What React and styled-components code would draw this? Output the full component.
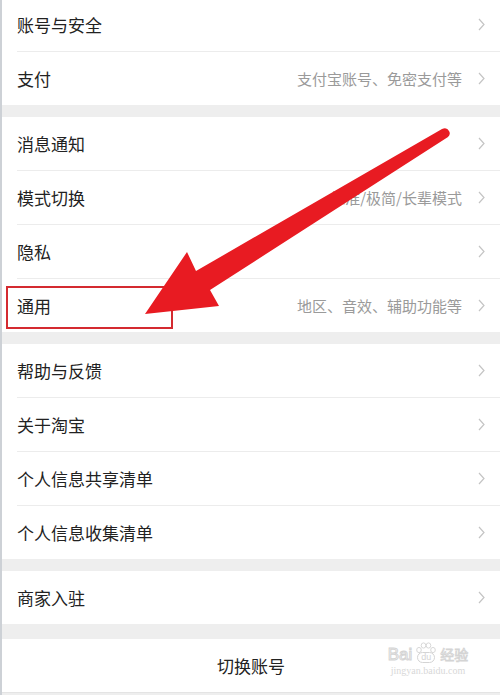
import React from "react";
import styled, { createGlobalStyle } from "styled-components";

const sections = [
  {
    rows: [
      { title: "账号与安全" },
      { title: "支付", hint: "支付宝账号、免密支付等" },
    ],
  },
  {
    rows: [
      { title: "消息通知" },
      { title: "模式切换", hint: "标准/极简/长辈模式" },
      { title: "隐私" },
      { title: "通用", hint: "地区、音效、辅助功能等" },
    ],
  },
  {
    rows: [
      { title: "帮助与反馈" },
      { title: "关于淘宝" },
      { title: "个人信息共享清单" },
      { title: "个人信息收集清单" },
    ],
  },
  {
    rows: [{ title: "商家入驻" }],
  },
];

const Chevron = () => (
  <svg width="7" height="13" viewBox="0 0 7 13">
    <path d="M1 1 L6 6.5 L1 12" fill="none" stroke="#c4c4c4" strokeWidth="1.2" />
  </svg>
);

const App = () => {
  return (
    <>
      <GlobalStyle />
      <Page>
        {sections.map((section, sIdx) => (
          <Section key={sIdx} $space={sIdx === 0 ? -2 : 12}>
            {section.rows.map((row, rIdx) => (
              <Row key={rIdx}>
                <RowInner $last={rIdx === section.rows.length - 1}>
                  <Title>{row.title}</Title>
                  {row.hint && <Hint>{row.hint}</Hint>}
                  <Chevron />
                </RowInner>
              </Row>
            ))}
          </Section>
        ))}
        <Section $space={15}>
          <SwitchButton>切换账号</SwitchButton>
        </Section>

        <Highlight />
        <ArrowLayer viewBox="0 0 500 695" width="500" height="695">
          <path
            d="M449 131 Q447 127 442 129 L196 271 L187 252 L145 314 L219 306 L210 290 L448 137 Q451 134 449 131 Z"
            fill="#e81b22"
          />
        </ArrowLayer>

        <Watermark>
          <MarkTop>
            <MarkLatin>Bai</MarkLatin>
            <PawBox>
              <svg width="22" height="11" viewBox="0 0 22 11">
                <g fill="none" stroke="#d8d8d8" strokeWidth="1">
                  <ellipse cx="4" cy="8" rx="2.3" ry="2.6" />
                  <ellipse cx="8.5" cy="3.5" rx="2.3" ry="2.6" />
                  <ellipse cx="13.5" cy="3.5" rx="2.3" ry="2.6" />
                  <ellipse cx="18" cy="8" rx="2.3" ry="2.6" />
                </g>
              </svg>
              <DuBadge>du</DuBadge>
            </PawBox>
            <MarkCjk>经验</MarkCjk>
          </MarkTop>
          <MarkUrl>jingyan.baidu.com</MarkUrl>
        </Watermark>
      </Page>
    </>
  );
};

const GlobalStyle = createGlobalStyle`
  html, body {
    margin: 0;
    padding: 0;
    background: #eeeeee;
  }
  body {
    font-family: "Noto Sans CJK SC", "Noto Sans", sans-serif;
  }
`;

const Page = styled.div`
  position: relative;
  width: 500px;
  height: 695px;
  overflow: hidden;
  box-sizing: border-box;
  border-left: 2px solid #cdd1d6;
  background: #eeeeee;
  display: flex;
  flex-direction: column;
`;

const Section = styled.div`
  background: #ffffff;
  margin-top: ${(p) => p.$space}px;
  display: flex;
  flex-direction: column;
`;

const Row = styled.div`
  padding-left: 15px;
  display: flex;
`;

const RowInner = styled.div`
  flex: 1;
  height: 53px;
  display: flex;
  align-items: center;
  padding-right: 15px;
  border-bottom: ${(p) => (p.$last ? "none" : "1px solid #ececec")};
`;

const Title = styled.div`
  font-size: 17px;
  color: #222222;
  margin-right: auto;
`;

const Hint = styled.div`
  font-size: 15px;
  color: #9a9a9a;
  margin-right: 16px;
`;

const SwitchButton = styled.div`
  height: 53px;
  display: flex;
  align-items: center;
  justify-content: center;
  font-size: 17px;
  color: #222222;
  border-bottom: 1px solid #e4e4e4;
`;

const Highlight = styled.div`
  position: absolute;
  left: 4px;
  top: 286px;
  width: 167px;
  height: 43px;
  box-sizing: border-box;
  border: 2px solid #d42a30;
  pointer-events: none;
`;

const ArrowLayer = styled.svg`
  position: absolute;
  left: -2px;
  top: 0;
  pointer-events: none;
`;

const Watermark = styled.div`
  position: absolute;
  left: 380px;
  top: 642px;
  width: 92px;
  display: flex;
  flex-direction: column;
  align-items: center;
  pointer-events: none;
`;

const MarkTop = styled.div`
  display: flex;
  align-items: flex-end;
  gap: 3px;
`;

const MarkLatin = styled.span`
  font-family: "Liberation Sans", sans-serif;
  font-size: 17px;
  line-height: 17px;
  color: #ffffff;
  -webkit-text-stroke: 1px #d4d4d4;
`;

const PawBox = styled.div`
  display: flex;
  flex-direction: column;
  align-items: center;
`;

const DuBadge = styled.span`
  font-family: "Liberation Sans", sans-serif;
  font-size: 9px;
  line-height: 9px;
  padding: 0 3px;
  border: 1px solid #d4d4d4;
  border-radius: 6px;
  color: #d4d4d4;
  margin-top: -1px;
`;

const MarkCjk = styled.span`
  font-size: 14px;
  line-height: 17px;
  color: #ffffff;
  -webkit-text-stroke: 0.8px #d4d4d4;
`;

const MarkUrl = styled.span`
  font-family: "Liberation Serif", serif;
  font-size: 10px;
  line-height: 12px;
  color: #d8d8d8;
  margin-top: 2px;
`;

export default App;
